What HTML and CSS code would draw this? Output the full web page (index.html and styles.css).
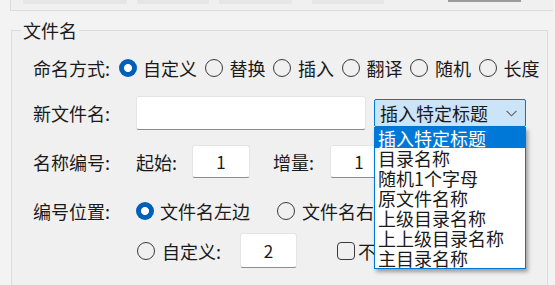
FILE: index.html
```html
<!DOCTYPE html>
<html lang="zh-CN">
<head>
    <meta charset="UTF-8">
    <meta name="viewport" content="width=device-width, initial-scale=1.0">
    <title>文件名</title>
    <link rel="stylesheet" href="styles.css">
</head>
<body>
    <div class="top-group">
        <span class="stub stub-1"></span>
        <span class="stub stub-2"></span>
        <span class="stub stub-3"></span>
        <span class="stub stub-4"></span>
        <span class="stub-dark"></span>
    </div>

    <div class="group">
        <span class="group-title">文件名</span>

        <div class="row row-mode">
            <span class="label label-mode">命名方式:</span>
            <label class="opt"><span class="radio checked"></span>自定义</label>
            <label class="opt"><span class="radio"></span>替换</label>
            <label class="opt"><span class="radio"></span>插入</label>
            <label class="opt"><span class="radio"></span>翻译</label>
            <label class="opt"><span class="radio"></span>随机</label>
            <label class="opt"><span class="radio"></span>长度</label>
        </div>

        <div class="row row-name">
            <span class="label">新文件名:</span>
            <span class="textbox textbox-wide"></span>
            <div class="combo">
                <span>插入特定标题</span>
                <svg class="chevron" width="11" height="7" viewBox="0 0 11 7">
                    <path d="M0.5 0.8 L5.5 5.8 L10.5 0.8" fill="none" stroke="#606060" stroke-width="1.1"/>
                </svg>
            </div>
        </div>

        <div class="row row-number">
            <span class="label">名称编号:</span>
            <span class="sublabel">起始:</span>
            <span class="textbox textbox-num">1</span>
            <span class="sublabel sublabel-step">增量:</span>
            <span class="textbox textbox-num">1</span>
        </div>

        <div class="row row-pos">
            <span class="label">编号位置:</span>
            <label class="opt"><span class="radio checked"></span>文件名左边</label>
            <label class="opt opt-right"><span class="radio"></span>文件名右边</label>
        </div>

        <div class="row row-custom">
            <label class="opt"><span class="radio"></span>自定义:</label>
            <span class="textbox textbox-pos">2</span>
            <label class="check-opt"><span class="checkbox"></span>不补零</label>
        </div>

        <ul class="dropdown-list">
            <li class="selected">插入特定标题</li>
            <li>目录名称</li>
            <li>随机1个字母</li>
            <li>原文件名称</li>
            <li>上级目录名称</li>
            <li>上上级目录名称</li>
            <li>主目录名称</li>
        </ul>
    </div>
</body>
</html>
```

FILE: styles.css
```css
body {
    margin: 0;
    background-color: #f3f3f3;
    font-family: "Noto Sans CJK SC", "Microsoft YaHei", sans-serif;
    font-size: 18px;
    color: #1a1a1a;
    overflow: hidden;
}
.top-group {
    display: flex;
    align-items: flex-start;
    width: 542px;
    height: 10px;
    margin-left: 10px;
    border-left: 1px solid #dcdcdc;
    border-bottom: 1px solid #dcdcdc;
    background-color: #f0f0f0;
}
.stub {
    height: 4px;
    background-color: #e6e6e6;
    border-radius: 0 0 2px 2px;
}
.stub-1 {
    width: 104px;
    margin-left: 12px;
}
.stub-2 {
    width: 72px;
    margin-left: 10px;
}
.stub-3 {
    width: 73px;
    margin-left: 10px;
}
.stub-4 {
    width: 72px;
    margin-left: 20px;
}
.stub-dark {
    width: 73px;
    height: 2px;
    margin-left: 64px;
    background-color: #9a9a9a;
}
.group {
    position: relative;
    width: 537px;
    height: 256px;
    margin: 19px 0 0 11px;
    padding: 22px 0 0 21px;
    box-sizing: border-box;
    border: 1px solid #dcdcdc;
    background-color: #f0f0f0;
}
.group-title {
    position: absolute;
    top: -10px;
    left: 9px;
    padding: 0 2px;
    line-height: 18px;
    background-color: #f2f2f2;
}
.row {
    display: flex;
    align-items: center;
    line-height: 20px;
    white-space: nowrap;
}
.row-mode {
    height: 30px;
    gap: 6.5px;
}
.row-name {
    height: 34px;
    margin-top: 13px;
}
.row-number {
    height: 33px;
    margin-top: 15px;
}
.row-pos {
    height: 30px;
    margin-top: 18px;
}
.row-custom {
    height: 35px;
    margin-top: 7px;
    padding-left: 103px;
}
.label {
    width: 103px;
    flex-shrink: 0;
}
.label-mode {
    width: 86px;
    margin-right: -6.5px;
}
.opt {
    display: flex;
    align-items: center;
    gap: 6px;
}
.opt-right {
    margin-left: 26px;
}
.radio {
    width: 16px;
    height: 16px;
    border: 1px solid #3a3a3a;
    border-radius: 50%;
    box-sizing: content-box;
    flex-shrink: 0;
    margin: 0 1px;
}
.radio.checked {
    width: 18px;
    height: 18px;
    margin: 0;
    border: none;
    background: radial-gradient(circle, #ffffff 0, #ffffff 3.6px, #005fb8 4.4px);
}
.textbox {
    display: flex;
    align-items: center;
    justify-content: center;
    box-sizing: border-box;
    height: 100%;
    background-color: #ffffff;
    border: 1px solid #e5e5e5;
    border-bottom: 1px solid #8d8d8d;
    border-radius: 3px;
    font-size: 17px;
}
.textbox-wide {
    width: 230px;
}
.textbox-num {
    width: 58px;
}
.textbox-pos {
    width: 57px;
    margin-left: 19px;
}
.sublabel {
    width: 56px;
}
.sublabel-step {
    width: 57px;
    margin-left: 23px;
}
.combo {
    display: flex;
    align-items: center;
    justify-content: space-between;
    box-sizing: border-box;
    width: 152px;
    height: 28px;
    margin-left: 8px;
    padding: 0 8px 0 5px;
    background-color: #cce4f7;
    border: 1px solid #0078d7;
    border-radius: 2px;
}
.chevron {
    display: block;
}
.check-opt {
    display: flex;
    align-items: center;
    gap: 3px;
    margin-left: 40px;
}
.checkbox {
    width: 16px;
    height: 16px;
    border: 1px solid #3a3a3a;
    border-radius: 4px;
}
.dropdown-list {
    position: absolute;
    top: 96px;
    left: 362px;
    width: 150px;
    margin: 0;
    padding: 0;
    list-style: none;
    background-color: #ffffff;
    border: 1px solid #0078d7;
    box-shadow: 2px 3px 4px rgba(0, 0, 0, 0.35);
}
.dropdown-list li {
    height: 20px;
    padding-left: 3px;
    line-height: 20px;
    white-space: nowrap;
}
.dropdown-list li.selected {
    background-color: #0078d7;
    color: #ffffff;
}
```
